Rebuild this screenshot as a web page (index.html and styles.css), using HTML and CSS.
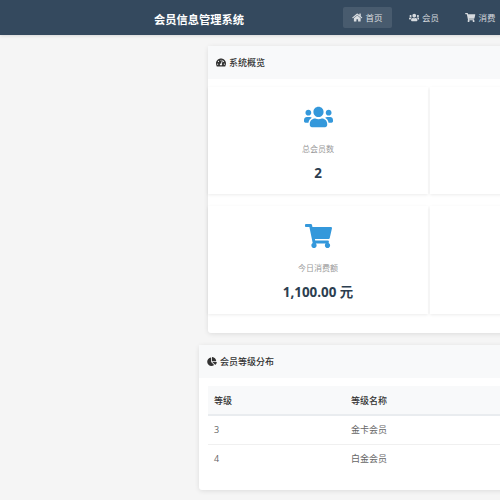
FILE: index.html
```html
<!DOCTYPE html>
<html lang="zh">
<head>
<meta charset="utf-8">
<title>会员信息管理系统</title>
<link rel="stylesheet" href="styles.css">
</head>
<body>
<header class="topbar">
  <div class="brand">会员信息管理系统</div>
  <nav class="nav">
    <a class="nav-item active"><svg class="ico ico-nav" viewBox="0 0 576 512"><path d="M280.37 148.26L96 300.11V464a16 16 0 0 0 16 16l112.06-.29a16 16 0 0 0 15.92-16V368a16 16 0 0 1 16-16h64a16 16 0 0 1 16 16v95.64a16 16 0 0 0 16 16.05L464 480a16 16 0 0 0 16-16V300L295.67 148.26a12.19 12.19 0 0 0-15.3 0zM571.6 251.47L488 182.56V44.05a12 12 0 0 0-12-12h-56a12 12 0 0 0-12 12v72.61L318.47 43a48 48 0 0 0-61 0L4.34 251.47a12 12 0 0 0-1.6 16.9l25.5 31A12 12 0 0 0 45.15 301l235.22-193.74a12.19 12.19 0 0 1 15.3 0L530.9 301a12 12 0 0 0 16.9-1.6l25.5-31a12 12 0 0 0-1.7-16.93z"/></svg>首页</a>
    <a class="nav-item"><svg class="ico ico-nav" viewBox="0 0 640 512"><path d="M96 224c35.3 0 64-28.7 64-64s-28.7-64-64-64-64 28.7-64 64 28.7 64 64 64zm448 0c35.3 0 64-28.7 64-64s-28.7-64-64-64-64 28.7-64 64 28.7 64 64 64zm32 32h-64c-17.6 0-33.5 7.1-45.1 18.6 40.3 22.1 68.9 62 75.1 109.4h66c17.7 0 32-14.3 32-32v-32c0-35.3-28.7-64-64-64zm-256 0c61.9 0 112-50.1 112-112S381.9 32 320 32 208 82.1 208 144s50.1 112 112 112zm76.8 32h-8.3c-20.8 10-43.9 16-68.5 16s-47.6-6-68.5-16h-8.3C179.6 288 128 339.6 128 403.2V432c0 26.5 21.5 48 48 48h288c26.5 0 48-21.5 48-48v-28.8c0-63.6-51.6-115.2-115.2-115.2zm-223.7-13.4C161.5 263.1 145.6 256 128 256H64c-35.3 0-64 28.7-64 64v32c0 17.7 14.3 32 32 32h65.9c6.3-47.4 34.9-87.3 75.2-109.4z"/></svg>会员</a>
    <a class="nav-item"><svg class="ico ico-nav" viewBox="0 0 576 512"><path d="M528.12 301.319l47.273-208C578.806 78.301 567.391 64 551.99 64H159.208l-9.166-44.81C147.758 8.021 137.93 0 126.529 0H24C10.745 0 0 10.745 0 24v16c0 13.255 10.745 24 24 24h69.883l70.248 343.435C147.325 417.1 136 435.222 136 456c0 30.928 25.072 56 56 56s56-25.072 56-56c0-15.674-6.447-29.835-16.824-40h209.647C430.447 426.165 424 440.326 424 456c0 30.928 25.072 56 56 56s56-25.072 56-56c0-22.172-12.888-41.332-31.579-50.405l5.517-24.276c3.413-15.018-8.002-29.319-23.403-29.319H218.117l-6.545-32h293.145c11.206 0 20.92-7.754 23.403-18.681z"/></svg>消费</a>
  </nav>
</header>
<main class="main">
  <section class="card card-overview">
    <h2 class="card-head"><svg class="ico ico-head" viewBox="0 0 576 512"><path d="M288 32C128.94 32 0 160.94 0 320c0 52.8 14.25 102.26 39.06 144.8 5.61 9.62 16.3 15.2 27.44 15.2h443c11.14 0 21.83-5.58 27.44-15.2C561.75 422.26 576 372.8 576 320c0-159.06-128.94-288-288-288zm0 64c14.71 0 26.58 10.13 30.32 23.65-1.11 2.26-2.64 4.23-3.45 6.67l-9.22 27.67c-5.13 3.49-10.97 6.01-17.64 6.01-17.67 0-32-14.33-32-32S270.33 96 288 96zM96 384c-17.67 0-32-14.33-32-32s14.33-32 32-32 32 14.33 32 32-14.33 32-32 32zm48-160c-17.67 0-32-14.33-32-32s14.33-32 32-32 32 14.33 32 32-14.33 32-32 32zm246.77-72.41l-61.33 184C343.13 347.33 352 364.54 352 384c0 11.72-3.38 22.55-8.88 32H232.88c-5.5-9.45-8.88-20.28-8.88-32 0-33.94 26.5-61.43 59.9-63.59l61.34-184.01c4.17-12.56 17.73-19.45 30.36-15.17 12.57 4.19 19.35 17.79 15.17 30.36zm14.66 57.2l15.52-46.55c3.47-1.29 7.13-2.23 11.05-2.23 17.67 0 32 14.33 32 32s-14.33 32-32 32c-11.38-.01-20.89-6.28-26.57-15.22zM480 384c-17.67 0-32-14.33-32-32s14.33-32 32-32 32 14.33 32 32-14.33 32-32 32z"/></svg>系统概览</h2>
    <div class="stats">
      <div class="stat">
        <svg class="ico ico-stat" viewBox="0 0 640 512"><path d="M96 224c35.3 0 64-28.7 64-64s-28.7-64-64-64-64 28.7-64 64 28.7 64 64 64zm448 0c35.3 0 64-28.7 64-64s-28.7-64-64-64-64 28.7-64 64 28.7 64 64 64zm32 32h-64c-17.6 0-33.5 7.1-45.1 18.6 40.3 22.1 68.9 62 75.1 109.4h66c17.7 0 32-14.3 32-32v-32c0-35.3-28.7-64-64-64zm-256 0c61.9 0 112-50.1 112-112S381.9 32 320 32 208 82.1 208 144s50.1 112 112 112zm76.8 32h-8.3c-20.8 10-43.9 16-68.5 16s-47.6-6-68.5-16h-8.3C179.6 288 128 339.6 128 403.2V432c0 26.5 21.5 48 48 48h288c26.5 0 48-21.5 48-48v-28.8c0-63.6-51.6-115.2-115.2-115.2zm-223.7-13.4C161.5 263.1 145.6 256 128 256H64c-35.3 0-64 28.7-64 64v32c0 17.7 14.3 32 32 32h65.9c6.3-47.4 34.9-87.3 75.2-109.4z"/></svg>
        <div class="stat-label">总会员数</div>
        <div class="stat-value">2</div>
      </div>
      <div class="stat"></div>
      <div class="stat">
        <svg class="ico ico-stat" viewBox="0 0 576 512"><path d="M528.12 301.319l47.273-208C578.806 78.301 567.391 64 551.99 64H159.208l-9.166-44.81C147.758 8.021 137.93 0 126.529 0H24C10.745 0 0 10.745 0 24v16c0 13.255 10.745 24 24 24h69.883l70.248 343.435C147.325 417.1 136 435.222 136 456c0 30.928 25.072 56 56 56s56-25.072 56-56c0-15.674-6.447-29.835-16.824-40h209.647C430.447 426.165 424 440.326 424 456c0 30.928 25.072 56 56 56s56-25.072 56-56c0-22.172-12.888-41.332-31.579-50.405l5.517-24.276c3.413-15.018-8.002-29.319-23.403-29.319H218.117l-6.545-32h293.145c11.206 0 20.92-7.754 23.403-18.681z"/></svg>
        <div class="stat-label">今日消费额</div>
        <div class="stat-value">1,100.00 元</div>
      </div>
      <div class="stat"></div>
    </div>
  </section>
  <section class="card card-levels">
    <h2 class="card-head"><svg class="ico ico-head" viewBox="0 0 544 512"><path d="M527.79 288H290.5l158.03 158.03c6.04 6.04 15.98 6.53 22.19.68 38.7-36.46 65.32-85.61 73.13-140.86 1.34-9.46-6.51-17.85-16.06-17.85zm-15.83-64.8C503.72 103.74 408.26 8.28 288.8.04 279.68-.59 272 7.1 272 16.24V240h223.77c9.14 0 16.82-7.68 16.19-16.8zM224 288V50.71c0-9.55-8.39-17.4-17.84-16.06C86.99 51.49-4.1 155.6.14 280.37 4.5 408.51 114.83 513.59 243.03 511.98c50.4-.63 96.97-16.87 135.26-44.03 7.9-5.6 8.42-17.23 1.57-24.08L224 288z"/></svg>会员等级分布</h2>
    <div class="card-body">
      <table class="levels">
        <thead><tr><th class="col-a">等级</th><th>等级名称</th></tr></thead>
        <tbody>
          <tr><td>3</td><td>金卡会员</td></tr>
          <tr><td>4</td><td>白金会员</td></tr>
        </tbody>
      </table>
    </div>
  </section>
</main>
</body>
</html>
```
FILE: styles.css
```css
* { box-sizing: border-box; }
html, body { margin: 0; height: 500px; overflow: hidden; }
body {
  background: #f5f5f5;
  color: #333;
  font-family: "Open Sans", "Noto Sans CJK SC", sans-serif;
  font-size: 9px;
}
.ico { fill: currentColor; display: block; flex: none; }
.topbar {
  height: 35px;
  background: #34495e;
  box-shadow: 0 1px 3px rgba(0,0,0,.12);
  display: flex;
  align-items: center;
  padding-left: 154px;
  width: 700px;
  position: relative;
}
.brand { color: #fff; font-size: 11.25px; font-weight: 700; width: 189px; padding-top: 3px; }
.nav { display: flex; gap: 8px; margin-top: -1px; }
.nav-item {
  display: flex;
  align-items: center;
  gap: 3px;
  height: 21px;
  padding: 0 9px;
  color: rgba(255,255,255,.8);
  border-radius: 2px;
  font-size: 8.5px;
}
.nav-item.active { background: rgba(255,255,255,.1); }
.ico-nav { height: 9px; width: 10.5px; }
.main { display: flex; flex-direction: column; align-items: flex-start; padding-top: 11px; }
.card { background: #fff; box-shadow: 0 1px 5px rgba(0,0,0,.1); border-radius: 3px; }
.card-overview { margin-left: 208px; width: 500px; height: 287px; }
.card-levels { margin-left: 199px; margin-top: 12px; width: 500px; height: 145px; }
.card-head {
  margin: 0;
  height: 33px;
  display: flex;
  align-items: center;
  gap: 3px;
  padding-left: 8px;
  padding-bottom: 1px;
  background: #f8f9fa;
  color: #333;
  font-size: 9px;
  font-weight: 500;
}
.ico-head { height: 9px; width: 10px; }
.stats {
  display: grid;
  grid-template-columns: 220px 220px;
  grid-template-rows: 107px 108px;
  column-gap: 2px;
  row-gap: 12px;
  padding-top: 8px;
}
.stat {
  background: #fff;
  box-shadow: 0 1px 3px rgba(0,0,0,.08);
  display: flex;
  flex-direction: column;
  align-items: center;
  padding-top: 18px;
}
.ico-stat { height: 24px; width: 29px; color: #3498db; }
.stat-label { color: #999; font-size: 8px; margin-top: 13.5px; line-height: 12px; }
.stat-value { color: #2c3e50; font-size: 13.4px; font-weight: 700; margin-top: 9px; line-height: 18px; }
.card-body { padding: 8px 9px; }
.levels { border-collapse: collapse; width: 400px; table-layout: fixed; }
.levels th, .levels td { text-align: left; padding: 0 6px; font-size: 9px; height: 29px; border-bottom: 1px solid #f0f0f0; }
.levels th { background: #f8f9fa; font-weight: 500; color: #333; border-bottom: 2px solid #e9ecef; }
.levels td { color: #666; }
.levels tbody tr:last-child td { border-bottom: 0; }
.col-a { width: 137px; }
```
